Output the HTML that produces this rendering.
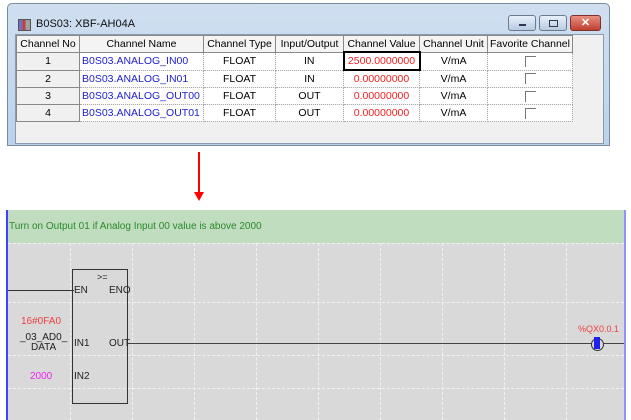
<!DOCTYPE html><html><head><style>
body{margin:0;width:631px;height:420px;background:#fff;position:relative;overflow:hidden;font-family:"Liberation Sans",sans-serif;}
.win{position:absolute;left:7px;top:3px;width:603px;height:143px;background:linear-gradient(#cfdff0,#bcd2ea);border:1px solid #7a8aa0;border-radius:5px 5px 0 0;box-sizing:border-box;}
.title{position:absolute;left:28px;top:14px;font-size:11px;color:#111;}
.icon{position:absolute;left:10px;top:15px;width:11px;height:10px;background:linear-gradient(90deg,#7070c0 0 30%,#c04040 30% 60%,#a0a0a0 60%);border:1px solid #555;}
.btn{position:absolute;top:11px;height:16px;border:1px solid #6a7a90;border-radius:3px;background:linear-gradient(#e8f0fa,#b8cbe0);box-sizing:border-box;}
.client{position:absolute;left:7px;top:30px;width:587px;height:108px;background:#f0f0f0;border:1px solid #8a9ab0;}
table{position:absolute;left:0;top:0;border-collapse:collapse;font-size:10.5px;table-layout:fixed;}
td{height:16px;padding:0;text-align:center;border:1px dotted #aaa;background:#fff;line-height:16px;overflow:hidden;white-space:nowrap;}
th{font-weight:normal;height:15px;border:1px solid #888;background:#f4f4f4;padding:0;font-size:10.5px;white-space:nowrap;overflow:hidden;}
td.no{background:#f0f0f0;border:1px solid #888;}
td.nm{color:#2020d0;text-align:left;padding-left:2px;}
td.v{color:#f02020;}
.cb{display:inline-block;width:10px;height:10px;border-top:1px solid #777;border-left:1px solid #777;vertical-align:middle;}
.ld{position:absolute;left:6px;top:210px;width:620px;height:210px;background:#d9d9d9;border-left:2px solid #4040ff;border-right:2px solid #9090ff;box-sizing:border-box;}
.green{position:absolute;left:0;top:0;right:0;height:33px;background:#c0ddc0;color:#2a8a2a;font-size:10px;line-height:33px;padding-left:1px;}
.vl{position:absolute;top:33px;bottom:0;border-left:1px dashed #f2f2f2;}
.hl{position:absolute;left:0;right:0;border-top:1px dashed #f2f2f2;}
.t{position:absolute;font-size:10px;color:#222;}
</style></head><body>
<div class="win">
<div class="icon"></div><div class="title">B0S03: XBF-AH04A</div>
<div class="btn" style="left:500px;width:28px"><div style="position:absolute;left:10px;top:8px;width:7px;height:2px;background:#335"></div></div>
<div class="btn" style="left:531px;width:28px"><div style="position:absolute;left:9px;top:4px;width:7px;height:5px;border:1px solid #335"></div></div>
<div class="btn" style="left:562px;width:31px;background:linear-gradient(#e89080,#c04030);border-color:#803028;color:#fff;font-size:11px;font-weight:bold;text-align:center;line-height:14px">✕</div>
<div class="client"><table>
<colgroup><col style="width:63px"><col style="width:124px"><col style="width:72px"><col style="width:68px"><col style="width:76px"><col style="width:68px"><col style="width:85px"></colgroup>
<tr><th>Channel No</th><th>Channel Name</th><th>Channel Type</th><th>Input/Output</th><th>Channel Value</th><th>Channel Unit</th><th>Favorite Channel</th></tr>
<tr><td class="no">1</td><td class="nm">B0S03.ANALOG_IN00</td><td>FLOAT</td><td>IN</td><td class="v" style="border:2px solid #000">2500.0000000</td><td>V/mA</td><td><span class="cb"></span></td></tr>
<tr><td class="no">2</td><td class="nm">B0S03.ANALOG_IN01</td><td>FLOAT</td><td>IN</td><td class="v">0.00000000</td><td>V/mA</td><td><span class="cb"></span></td></tr>
<tr><td class="no">3</td><td class="nm">B0S03.ANALOG_OUT00</td><td>FLOAT</td><td>OUT</td><td class="v">0.00000000</td><td>V/mA</td><td><span class="cb"></span></td></tr>
<tr><td class="no">4</td><td class="nm">B0S03.ANALOG_OUT01</td><td>FLOAT</td><td>OUT</td><td class="v">0.00000000</td><td>V/mA</td><td><span class="cb"></span></td></tr>
</table></div></div>
<div style="position:absolute;left:198px;top:152px;width:2px;height:42px;background:#f00"></div>
<div style="position:absolute;left:194px;top:192px;border-left:5px solid transparent;border-right:5px solid transparent;border-top:9px solid #f00"></div>
<div class="ld">
<div class="green">Turn on Output 01 if Analog Input 00 value is above 2000</div>
<div class="vl" style="left:62px"></div><div class="vl" style="left:124px"></div><div class="vl" style="left:186px"></div><div class="vl" style="left:248px"></div><div class="vl" style="left:310px"></div><div class="vl" style="left:372px"></div><div class="vl" style="left:434px"></div><div class="vl" style="left:496px"></div><div class="vl" style="left:558px"></div>
<div class="hl" style="top:33px"></div><div class="hl" style="top:92px"></div><div class="hl" style="top:145px"></div><div class="hl" style="top:178px"></div>
<div style="position:absolute;left:0;top:80px;width:66px;border-top:1px solid #333"></div>
<div style="position:absolute;left:64px;top:59px;width:56px;height:135px;border:1px solid #333;box-sizing:border-box"></div>
<div class="t" style="left:89px;top:62px;font-size:9px">&gt;=</div>
<div class="t" style="left:66px;top:75px">EN</div><div class="t" style="left:101px;top:75px">ENO</div>
<div class="t" style="left:66px;top:128px">IN1</div><div class="t" style="left:101px;top:128px">OUT</div>
<div class="t" style="left:66px;top:161px">IN2</div>
<div class="t" style="left:13px;top:106px;color:#f04040">16#0FA0</div>
<div class="t" style="left:12px;top:123px;text-align:center;line-height:10px">_03_AD0_<br>DATA</div>
<div class="t" style="left:22px;top:161px;color:#f020f0">2000</div>
<div style="position:absolute;left:120px;top:133px;right:0;border-top:1px solid #444"></div>
<div class="t" style="left:570px;top:114px;color:#f04040;font-size:9px">%QX0.0.1</div>
<div style="position:absolute;left:583px;top:128px;width:11px;height:11px;border:1px solid #333;border-radius:50%;background:#d9d9d9"></div>
<div style="position:absolute;left:586px;top:127px;width:6px;height:12px;background:#2020f0"></div>
</div>
</body></html>
